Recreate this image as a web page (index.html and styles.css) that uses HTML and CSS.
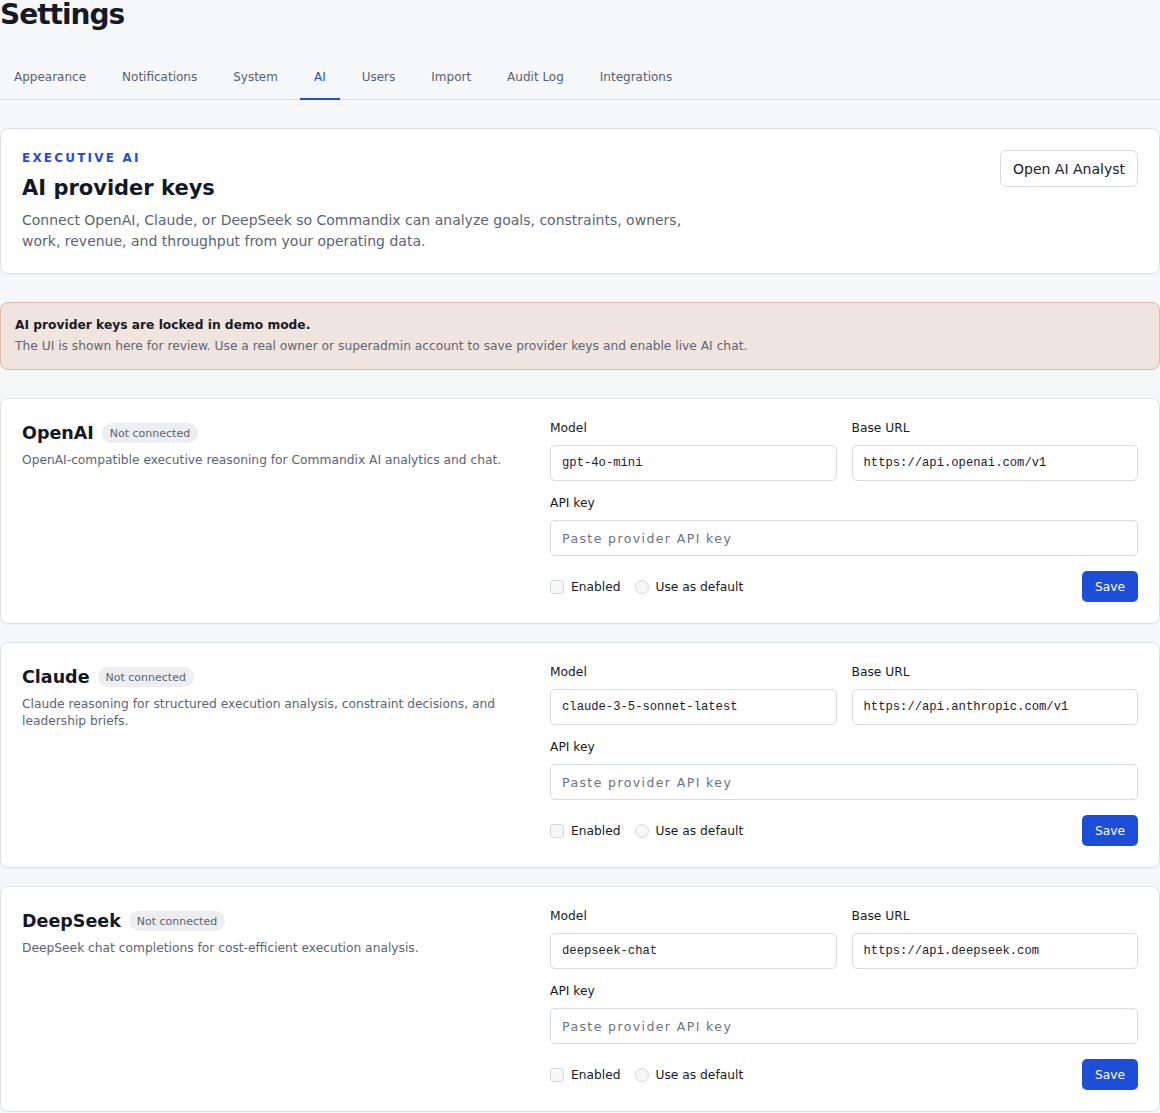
FILE: index.html
```html
<!DOCTYPE html>
<html lang="en">
<head>
    <meta charset="UTF-8">
    <meta name="viewport" content="width=device-width, initial-scale=1.0">
    <title>Settings - AI</title>
    <link rel="stylesheet" href="styles.css">
</head>
<body>
    <div class="page">
        <h1 class="page-title">Settings</h1>

        <nav class="tabs">
            <a href="#" class="tab">Appearance</a>
            <a href="#" class="tab">Notifications</a>
            <a href="#" class="tab">System</a>
            <a href="#" class="tab active">AI</a>
            <a href="#" class="tab">Users</a>
            <a href="#" class="tab">Import</a>
            <a href="#" class="tab">Audit Log</a>
            <a href="#" class="tab">Integrations</a>
        </nav>

        <section class="card intro">
            <div class="intro-text">
                <p class="eyebrow">Executive AI</p>
                <h2 class="intro-title">AI provider keys</h2>
                <p class="intro-desc">Connect OpenAI, Claude, or DeepSeek so Commandix can analyze goals, constraints, owners, work, revenue, and throughput from your operating data.</p>
            </div>
            <button class="btn-outline">Open AI Analyst</button>
        </section>

        <div class="alert">
            <p class="alert-title">AI provider keys are locked in demo mode.</p>
            <p class="alert-body">The UI is shown here for review. Use a real owner or superadmin account to save provider keys and enable live AI chat.</p>
        </div>

        <!-- OpenAI -->
        <section class="card provider">
            <div class="provider-info">
                <div class="provider-head">
                    <h3 class="provider-name">OpenAI</h3>
                    <span class="badge">Not connected</span>
                </div>
                <p class="provider-desc">OpenAI-compatible executive reasoning for Commandix AI analytics and chat.</p>
            </div>
            <div class="provider-form">
                <div class="field">
                    <label>Model</label>
                    <input type="text" class="mono" value="gpt-4o-mini">
                </div>
                <div class="field">
                    <label>Base URL</label>
                    <input type="text" class="mono" value="https://api.openai.com/v1">
                </div>
                <div class="field wide">
                    <label>API key</label>
                    <input type="password" class="key" placeholder="Paste provider API key">
                </div>
                <div class="form-foot wide">
                    <label class="check"><input type="checkbox" disabled> Enabled</label>
                    <label class="check radio-check"><input type="radio" name="default" disabled> Use as default</label>
                    <button class="btn-primary">Save</button>
                </div>
            </div>
        </section>

        <!-- Claude -->
        <section class="card provider">
            <div class="provider-info">
                <div class="provider-head">
                    <h3 class="provider-name">Claude</h3>
                    <span class="badge">Not connected</span>
                </div>
                <p class="provider-desc">Claude reasoning for structured execution analysis, constraint decisions, and leadership briefs.</p>
            </div>
            <div class="provider-form">
                <div class="field">
                    <label>Model</label>
                    <input type="text" class="mono" value="claude-3-5-sonnet-latest">
                </div>
                <div class="field">
                    <label>Base URL</label>
                    <input type="text" class="mono" value="https://api.anthropic.com/v1">
                </div>
                <div class="field wide">
                    <label>API key</label>
                    <input type="password" class="key" placeholder="Paste provider API key">
                </div>
                <div class="form-foot wide">
                    <label class="check"><input type="checkbox" disabled> Enabled</label>
                    <label class="check radio-check"><input type="radio" name="default" disabled> Use as default</label>
                    <button class="btn-primary">Save</button>
                </div>
            </div>
        </section>

        <!-- DeepSeek -->
        <section class="card provider">
            <div class="provider-info">
                <div class="provider-head">
                    <h3 class="provider-name">DeepSeek</h3>
                    <span class="badge">Not connected</span>
                </div>
                <p class="provider-desc">DeepSeek chat completions for cost-efficient execution analysis.</p>
            </div>
            <div class="provider-form">
                <div class="field">
                    <label>Model</label>
                    <input type="text" class="mono" value="deepseek-chat">
                </div>
                <div class="field">
                    <label>Base URL</label>
                    <input type="text" class="mono" value="https://api.deepseek.com">
                </div>
                <div class="field wide">
                    <label>API key</label>
                    <input type="password" class="key" placeholder="Paste provider API key">
                </div>
                <div class="form-foot wide">
                    <label class="check"><input type="checkbox" disabled> Enabled</label>
                    <label class="check radio-check"><input type="radio" name="default" disabled> Use as default</label>
                    <button class="btn-primary">Save</button>
                </div>
            </div>
        </section>
    </div>
</body>
</html>
```

FILE: styles.css
```css
body {
    margin: 0;
    background: #f6f7f9;
    color: #131826;
    font-family: "DejaVu Sans", "Noto Sans", sans-serif;
}

p {
    margin: 0;
}

.page {
    display: flex;
    flex-direction: column;
}

.page-title {
    font-size: 28px;
    line-height: 36px;
    letter-spacing: -1px;
    font-weight: bold;
    margin: -3px 0 0 0;
    color: #151a26;
}

/* tabs */
.tabs {
    display: flex;
    gap: 8px;
    margin-top: 27px;
    border-bottom: 1px solid #d9dde3;
}

.tab {
    padding: 8px 14px 12px;
    font-size: 12px;
    line-height: 18px;
    color: #586173;
    text-decoration: none;
    border-bottom: 2px solid transparent;
    margin-bottom: -1px;
}

.tab.active {
    color: #1d4ed8;
    border-bottom-color: #1d4ed8;
}

/* cards */
.card {
    background: #fff;
    border: 1px solid #dce1e8;
    border-radius: 8px;
    box-shadow: 0 1px 2px rgba(16, 24, 40, 0.04);
}

.intro {
    margin-top: 28px;
    padding: 21px 21px 21px;
    display: flex;
    justify-content: space-between;
    align-items: flex-start;
}

.eyebrow {
    font-size: 12px;
    font-weight: bold;
    letter-spacing: 2.2px;
    text-transform: uppercase;
    color: #1d4ed8;
    line-height: 16px;
}

.intro-title {
    font-size: 21px;
    line-height: 28px;
    margin: 8px 0 8px;
}

.intro-desc {
    font-size: 14px;
    line-height: 21px;
    color: #5b6474;
    max-width: 680px;
}

.btn-outline {
    font-family: inherit;
    font-size: 14px;
    color: #1a2030;
    background: #fff;
    border: 1px solid #d5dbe4;
    border-radius: 6px;
    padding: 0 12px;
    height: 37px;
    cursor: pointer;
}

/* demo alert */
.alert {
    margin-top: 28px;
    background: #f0e4de;
    border: 1px solid #e3bba4;
    border-radius: 8px;
    padding: 12px 14px 13px;
}

.alert-title {
    font-size: 12.25px;
    font-weight: bold;
    line-height: 20px;
    color: #151a26;
}

.alert-body {
    font-size: 12.25px;
    line-height: 20px;
    color: #5e6676;
    margin-top: 1px;
}

/* provider cards */
.provider {
    margin-top: 18px;
    padding: 21px 21px 21px;
    display: grid;
    grid-template-columns: minmax(0, 1fr) 588px;
    gap: 28px;
}

.alert + .provider {
    margin-top: 28px;
}

.provider-head {
    display: flex;
    align-items: center;
    gap: 8px;
}

.provider-name {
    font-size: 17.5px;
    line-height: 26px;
    margin: 0;
}

.badge {
    display: flex;
    align-items: center;
    height: 20px;
    font-size: 11px;
    color: #5b6474;
    background: #eceef2;
    border-radius: 999px;
    padding: 0 8px;
}

.provider-desc {
    font-size: 12.25px;
    line-height: 17px;
    color: #5b6474;
    margin-top: 6px;
}

.provider-form {
    display: grid;
    grid-template-columns: 1fr 1fr;
    column-gap: 15px;
    row-gap: 14px;
}

.field {
    display: flex;
    flex-direction: column;
    gap: 8px;
}

.wide {
    grid-column: 1 / -1;
}

.field label {
    font-size: 12.25px;
    line-height: 17px;
    color: #151a26;
}

.field input {
    box-sizing: border-box;
    height: 36px;
    width: 100%;
    border: 1px solid #d5dbe4;
    border-radius: 5px;
    padding: 0 11px;
    background: #fff;
    color: #1a2030;
    outline: none;
}

.field input.mono {
    font-family: "Liberation Mono", monospace;
    font-size: 12.2px;
}

.field input.key {
    font-family: "DejaVu Sans", sans-serif;
    font-size: 12.5px;
    letter-spacing: 1.4px;
}

.field input.key::placeholder {
    color: #6b7280;
}

.form-foot {
    display: flex;
    align-items: center;
    margin-top: 1px;
}

.check {
    display: flex;
    align-items: center;
    gap: 7px;
    font-size: 12.25px;
    color: #151a26;
}

.radio-check {
    margin-left: 14px;
}

.check input {
    appearance: none;
    margin: 0;
    width: 14px;
    height: 14px;
    background: #f5f6f8;
    border: 1px solid #d3d7de;
    border-radius: 3px;
}

.check input[type="radio"] {
    border-radius: 50%;
}

.btn-primary {
    margin-left: auto;
    font-family: inherit;
    font-size: 12.25px;
    color: #fff;
    background: #1d4ed8;
    border: none;
    border-radius: 5px;
    padding: 0 13px;
    height: 31px;
    cursor: pointer;
}
```
